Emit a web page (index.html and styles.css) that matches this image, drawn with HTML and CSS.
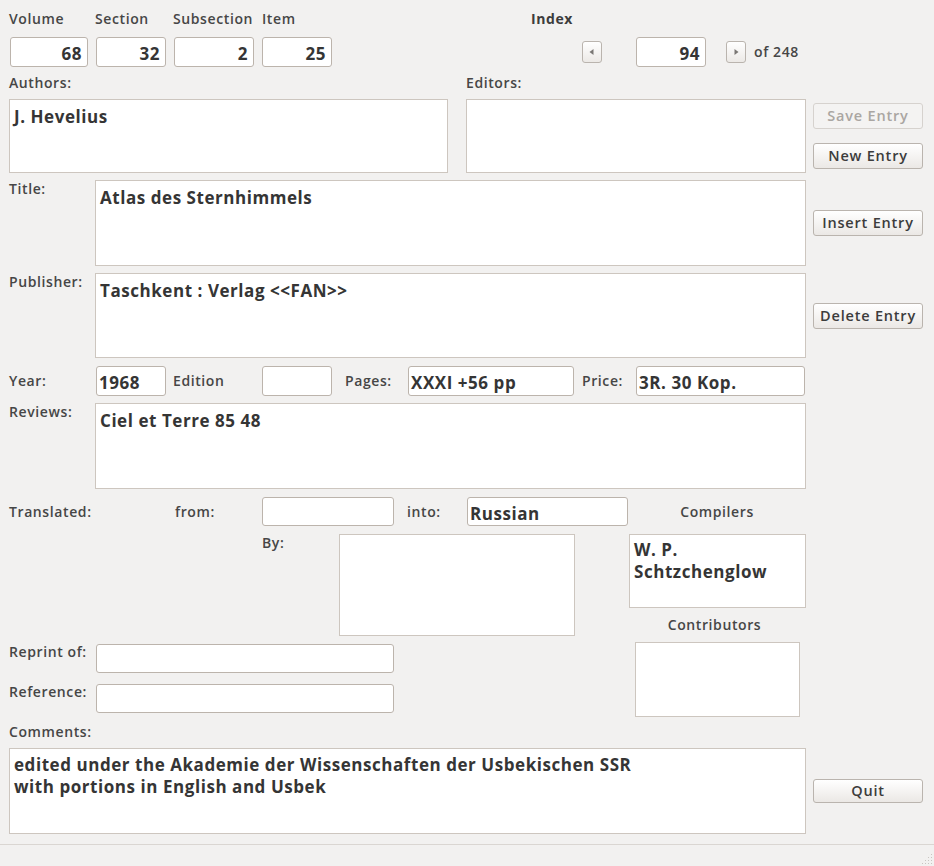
FILE: index.html
```html
<!DOCTYPE html>
<html>
<head>
<meta charset="utf-8">
<title>Entry</title>
<link rel="stylesheet" href="styles.css">
</head>
<body>
<div class="window">
  <div class="main">
    <div class="form">
      <div class="hdr-labels">
        <span class="lbl c-vol">Volume</span>
        <span class="lbl c-sec">Section</span>
        <span class="lbl c-sub">Subsection</span>
        <span class="lbl c-item">Item</span>
        <span class="lbl index-lbl">Index</span>
      </div>
      <div class="hdr-inputs">
        <div class="entry num w-vol">68</div>
        <div class="entry num w-sec">32</div>
        <div class="entry num w-sub">2</div>
        <div class="entry num w-item">25</div>
        <div class="arrow arrow-prev"><svg width="20" height="22" viewBox="0 0 20 22"><path d="M7.5 11 L11.5 8 L11.5 14 Z" fill="#7a7774"/></svg></div>
        <div class="entry num w-index">94</div>
        <div class="arrow arrow-next"><svg width="20" height="22" viewBox="0 0 20 22"><path d="M12.5 11 L8.5 8 L8.5 14 Z" fill="#7a7774"/></svg></div>
        <span class="lbl of-lbl">of 248</span>
      </div>
      <div class="ae-labels">
        <span class="lbl c-authors">Authors:</span>
        <span class="lbl">Editors:</span>
      </div>
      <div class="ae-boxes">
        <div class="text authors">J. Hevelius</div>
        <div class="text editors"></div>
      </div>
      <div class="row big title-row">
        <span class="lbl side">Title:</span>
        <div class="text wide h86">Atlas des Sternhimmels</div>
      </div>
      <div class="row big pub-row">
        <span class="lbl side">Publisher:</span>
        <div class="text wide h85">Taschkent : Verlag &lt;&lt;FAN&gt;&gt;</div>
      </div>
      <div class="row line year-row">
        <span class="lbl l-year">Year:</span>
        <div class="entry w70">1968</div>
        <span class="lbl l-edition">Edition</span>
        <div class="entry w70"></div>
        <span class="lbl l-pages">Pages:</span>
        <div class="entry w-pages">XXXI +56 pp</div>
        <span class="lbl l-price">Price:</span>
        <div class="entry w-price">3R. 30 Kop.</div>
      </div>
      <div class="row big rev-row">
        <span class="lbl side">Reviews:</span>
        <div class="text wide h86">Ciel et Terre 85 48</div>
      </div>
      <div class="row line trans-row">
        <span class="lbl l-trans">Translated:</span>
        <span class="lbl l-from">from:</span>
        <div class="entry w-from"></div>
        <span class="lbl l-into">into:</span>
        <div class="entry w-into">Russian</div>
        <span class="lbl l-comp">Compilers</span>
      </div>
      <div class="lower">
        <div class="lower-left">
          <div class="by-row">
            <span class="lbl l-by">By:</span>
            <div class="text by-box"></div>
          </div>
          <div class="ref-row reprint">
            <span class="lbl l-ref">Reprint of:</span>
            <div class="entry w-ref"></div>
          </div>
          <div class="ref-row reference">
            <span class="lbl l-ref">Reference:</span>
            <div class="entry w-ref"></div>
          </div>
        </div>
        <div class="lower-right">
          <div class="text comp-box">W. P.<br>Schtzchenglow</div>
          <div class="lbl contrib-lbl">Contributors</div>
          <div class="text contrib-box"></div>
        </div>
      </div>
      <div class="comments-lbl"><span class="lbl">Comments:</span></div>
      <div class="text comments">edited under the Akademie der Wissenschaften der Usbekischen SSR<br>with portions in English and Usbek</div>
    </div>
    <div class="buttons">
      <div class="btn disabled save">Save Entry</div>
      <div class="btn new">New Entry</div>
      <div class="btn insert">Insert Entry</div>
      <div class="btn delete">Delete Entry</div>
      <div class="btn quit">Quit</div>
    </div>
  </div>
  <div class="status">
    <svg class="grip" width="12" height="12" viewBox="0 0 12 12">
      <g fill="#c9c5c1">
        <rect x="10" y="1" width="1" height="1"/>
        <rect x="7" y="4" width="1" height="1"/><rect x="10" y="4" width="1" height="1"/>
        <rect x="4" y="7" width="1" height="1"/><rect x="7" y="7" width="1" height="1"/><rect x="10" y="7" width="1" height="1"/>
        <rect x="1" y="10" width="1" height="1"/><rect x="4" y="10" width="1" height="1"/><rect x="7" y="10" width="1" height="1"/><rect x="10" y="10" width="1" height="1"/>
      </g>
    </svg>
  </div>
</div>
</body>
</html>
```

FILE: styles.css
```css
* { box-sizing: border-box; }
html, body { margin: 0; padding: 0; }
body {
  background: #f2f1f0;
  font-family: "Open Sans", "DejaVu Sans", sans-serif;
  color: #3c3c3c;
  width: 934px;
  height: 866px;
  overflow: hidden;
}
.window { width: 934px; height: 866px; display: flex; flex-direction: column; }
.main { height: 844px; display: flex; }
.form { width: 806px; flex: none; }

.lbl {
  font-size: 14px;
  font-weight: 600;
  line-height: 18px;
  letter-spacing: 0.6px;
  color: #464646;
  white-space: nowrap;
}

.entry {
  height: 30px;
  background: #fff;
  border: 1px solid #bcb4ac;
  border-radius: 3px;
  font-size: 17px;
  font-weight: 700;
  letter-spacing: 0.55px;
  color: #353535;
  line-height: 22px;
  padding: 5px 2px 0 2px;
  white-space: nowrap;
  overflow: hidden;
  flex: none;
}
.entry.num { text-align: right; padding-right: 5px; }

.text {
  background: #fff;
  border: 1px solid #cdc6bf;
  font-size: 17px;
  font-weight: 700;
  letter-spacing: 0.55px;
  color: #353535;
  line-height: 22px;
  padding: 6px 4px 5px;
  flex: none;
}

/* header */
.hdr-labels { height: 37px; padding: 10px 0 0 9px; display: flex; }
.c-vol { width: 86px; }
.c-sec { width: 78px; }
.c-sub { width: 89px; }
.c-item { width: 269px; }
.index-lbl { font-weight: 700; color: #3c3c3c; }

.hdr-inputs { height: 30px; padding-left: 10px; display: flex; align-items: center; }
.w-vol { width: 78px; }
.w-sec { width: 70px; margin-left: 8px; }
.w-sub { width: 80px; margin-left: 8px; }
.w-item { width: 70px; margin-left: 8px; }
.w-index { width: 70px; margin-left: 34px; }
.arrow {
  width: 20px; height: 22px;
  border: 1px solid #bab4ae;
  border-radius: 3px;
  background: linear-gradient(#ffffff, #ece9e6);
  display: flex; align-items: center; justify-content: center;
  flex: none;
}
.arrow svg { display: block; margin: -1px; }
.arrow-prev { margin-left: 250px; }
.arrow-next { margin-left: 20px; }
.of-lbl { margin-left: 8px; }

/* authors / editors */
.ae-labels { margin-top: 7px; height: 18px; display: flex; padding-left: 9px; }
.c-authors { width: 457px; }
.ae-boxes { margin-top: 7px; display: flex; }
.authors { margin-left: 9px; width: 439px; height: 74px; }
.editors { margin-left: 18px; width: 340px; height: 74px; }

.row { display: flex; }
.row.big { align-items: flex-start; }
.row.line { align-items: center; }
.side { width: 95px; padding-left: 9px; flex: none; }
.wide { width: 711px; }
.h86 { height: 86px; }
.h85 { height: 85px; }
.title-row { margin-top: 7px; }
.pub-row { margin-top: 7px; }
.rev-row { margin-top: 7px; }

.year-row { margin-top: 8px; height: 30px; }
.l-year { width: 96px; padding-left: 9px; }
.w70 { width: 70px; }
.l-edition { width: 89px; margin-left: 7px; }
.l-pages { width: 63px; margin-left: 13px; }
.w-pages { width: 166px; }
.l-price { width: 54px; margin-left: 8px; }
.w-price { width: 169px; }

.trans-row { margin-top: 8px; height: 29px; }
.trans-row .entry { height: 29px; }
.l-trans { width: 175px; padding-left: 9px; }
.l-from { width: 87px; }
.w-from { width: 132px; }
.l-into { width: 60px; margin-left: 13px; }
.w-into { width: 161px; }
.l-comp { width: 178px; text-align: center; }

.lower { margin-top: 8px; display: flex; height: 183px; }
.lower-left { width: 629px; flex: none; }
.lower-right { width: 177px; flex: none; }
.by-row { display: flex; padding-left: 262px; }
.l-by { width: 77px; }
.by-box { width: 236px; height: 102px; }
.ref-row { display: flex; align-items: flex-start; }
.ref-row .entry { height: 29px; }
.reprint { margin-top: 8px; }
.reference { margin-top: 11px; }
.l-ref { width: 96px; padding-left: 9px; line-height: 16px; }
.w-ref { width: 298px; }
.comp-box { width: 177px; height: 74px; padding-top: 4px; }
.contrib-lbl { height: 34px; line-height: 34px; text-align: center; padding-right: 6px; }
.contrib-box { width: 165px; height: 75px; margin-left: 6px; }

.comments-lbl { margin-top: 6px; height: 18px; padding-left: 9px; display: flex; }
.comments { margin-top: 7px; margin-left: 9px; width: 797px; height: 86px; padding-top: 5px; }

/* buttons */
.buttons { width: 110px; margin-left: 7px; padding-top: 103px; display: flex; flex-direction: column; flex: none; }
.btn {
  height: 26px;
  border: 1px solid #bab4ae;
  border-radius: 3px;
  background: linear-gradient(#ffffff, #ebe8e5);
  font-size: 14.5px;
  font-weight: 600;
  letter-spacing: 0.8px;
  color: #3c3c3c;
  text-align: center;
  line-height: 24px;
  white-space: nowrap;
  flex: none;
}
.btn.disabled { color: #aaa6a2; border-color: #d6d2ce; background: #f4f3f2; }
.new { margin-top: 14px; }
.insert { margin-top: 41px; }
.delete { margin-top: 67px; }
.quit { margin-top: 450px; height: 24px; line-height: 22px; }

.status {
  height: 22px;
  border-top: 1px solid #dad6d2;
  position: relative;
}
.grip { position: absolute; right: 1px; bottom: 1px; }
```
